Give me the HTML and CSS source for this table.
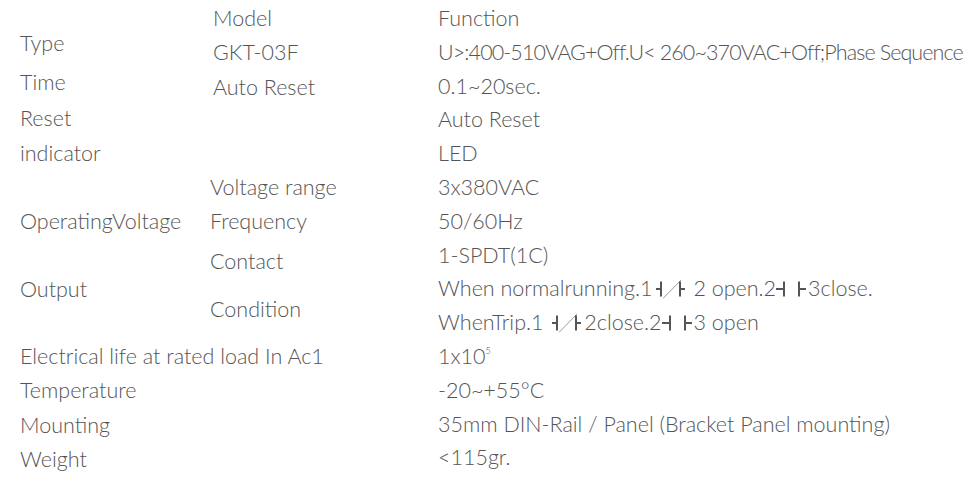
FILE: index.html
```html
<!DOCTYPE html>
<html lang="en">
<head>
<meta charset="utf-8">
<title>GKT-03F Specifications</title>
<link rel="stylesheet" href="styles.css">
</head>
<body>
<div class="spec">
  <div class="col col-label">
    <div class="cell m26">Type</div>
    <div class="cell m5">Time</div>
    <div class="cell m2">Reset</div>
    <div class="cell m1">indicator</div>
    <div class="cell m34">OperatingVoltage</div>
    <div class="cell m34">Output</div>
    <div class="cell m33">Electrical life at rated load In Ac1</div>
    <div class="cell">Temperature</div>
    <div class="cell m1">Mounting</div>
    <div class="cell">Weight</div>
  </div>
  <div class="col col-sub">
    <div class="cell m1 ind">Model</div>
    <div class="cell ind">GKT-03F</div>
    <div class="cell m1 ind">Auto Reset</div>
    <div class="cell m66">Voltage range</div>
    <div class="cell">Frequency</div>
    <div class="cell m6">Contact</div>
    <div class="cell m14">Condition</div>
  </div>
  <div class="col col-value">
    <div class="row">Function</div>
    <div class="row tight">U&gt;:400-510VAG+Off.U&lt; 260~370VAC+Off;Phase Sequence</div>
    <div class="row">0.1~20sec.</div>
    <div class="row">Auto Reset</div>
    <div class="row">LED</div>
    <div class="row">3x380VAC</div>
    <div class="row">50/60Hz</div>
    <div class="row">1-SPDT(1C)</div>
    <div class="row">When normalrunning.1<svg class="sym sym-nc" viewBox="0 0 30 20" aria-hidden="true"><path class="slash" d="M7 19.5L25 1"/><path class="bar" d="M0 10H5M5 2.5V17.5M24 2.5V17.5M24 10H29"/></svg> 2 open.2<svg class="sym sym-no" viewBox="0 0 30 20" aria-hidden="true"><path class="bar" d="M0 10H8M8 2.5V17.5M23 2.5V17.5M23 10H30"/></svg>3close.</div>
    <div class="row">WhenTrip.1 <svg class="sym sym-nc" viewBox="0 0 30 20" aria-hidden="true"><path class="slash" d="M7 19.5L25 1"/><path class="bar" d="M0 10H5M5 2.5V17.5M24 2.5V17.5M24 10H29"/></svg>2close.2<svg class="sym sym-no" viewBox="0 0 30 20" aria-hidden="true"><path class="bar" d="M0 10H8M8 2.5V17.5M23 2.5V17.5M23 10H30"/></svg>3 open</div>
    <div class="row">1x10<sup class="exp">5</sup></div>
    <div class="row">-20~+55°C</div>
    <div class="row">35mm DIN-Rail / Panel (Bracket Panel mounting)</div>
    <div class="row">&lt;115gr.</div>
  </div>
</div>
</body>
</html>
```

FILE: styles.css
```css
html, body {
  margin: 0;
  padding: 0;
  background: #ffffff;
}

body {
  font-family: "Lato", "Liberation Sans", sans-serif;
  font-weight: 300;
  font-size: 21.5px;
  color: #555555;
  width: 980px;
  height: 484px;
  overflow: hidden;
}

.spec {
  display: flex;
  padding-left: 20px;
}

.col {
  display: flex;
  flex-direction: column;
}

.col-label {
  width: 190px;
}

.col-sub {
  width: 228px;
}

.col-value {
  padding-top: 2px;
}

.cell {
  height: 34px;
  line-height: 34px;
  white-space: nowrap;
}

.row {
  height: 33.8px;
  line-height: 33.8px;
  white-space: nowrap;
}

.tight {
  letter-spacing: -0.9px;
}

.ind {
  padding-left: 3px;
}

.m1 { margin-top: 1px; }
.m2 { margin-top: 2px; }
.m5 { margin-top: 5px; }
.m6 { margin-top: 6px; }
.m14 { margin-top: 14px; }
.m26 { margin-top: 26px; }
.m33 { margin-top: 33px; }
.m34 { margin-top: 34px; }
.m66 { margin-top: 66px; }

.sym {
  width: 30px;
  height: 20px;
  vertical-align: -2.5px;
  fill: none;
}

.sym-nc {
  margin: 0 2px 0 3px;
}

.sym-no {
  margin-right: 2px;
}

.sym .bar {
  stroke: #555555;
  stroke-width: 2;
}

.sym .slash {
  stroke: #9a9a9a;
  stroke-width: 1;
}

.exp {
  font-size: 9px;
  vertical-align: 10px;
  line-height: 0;
}
```
